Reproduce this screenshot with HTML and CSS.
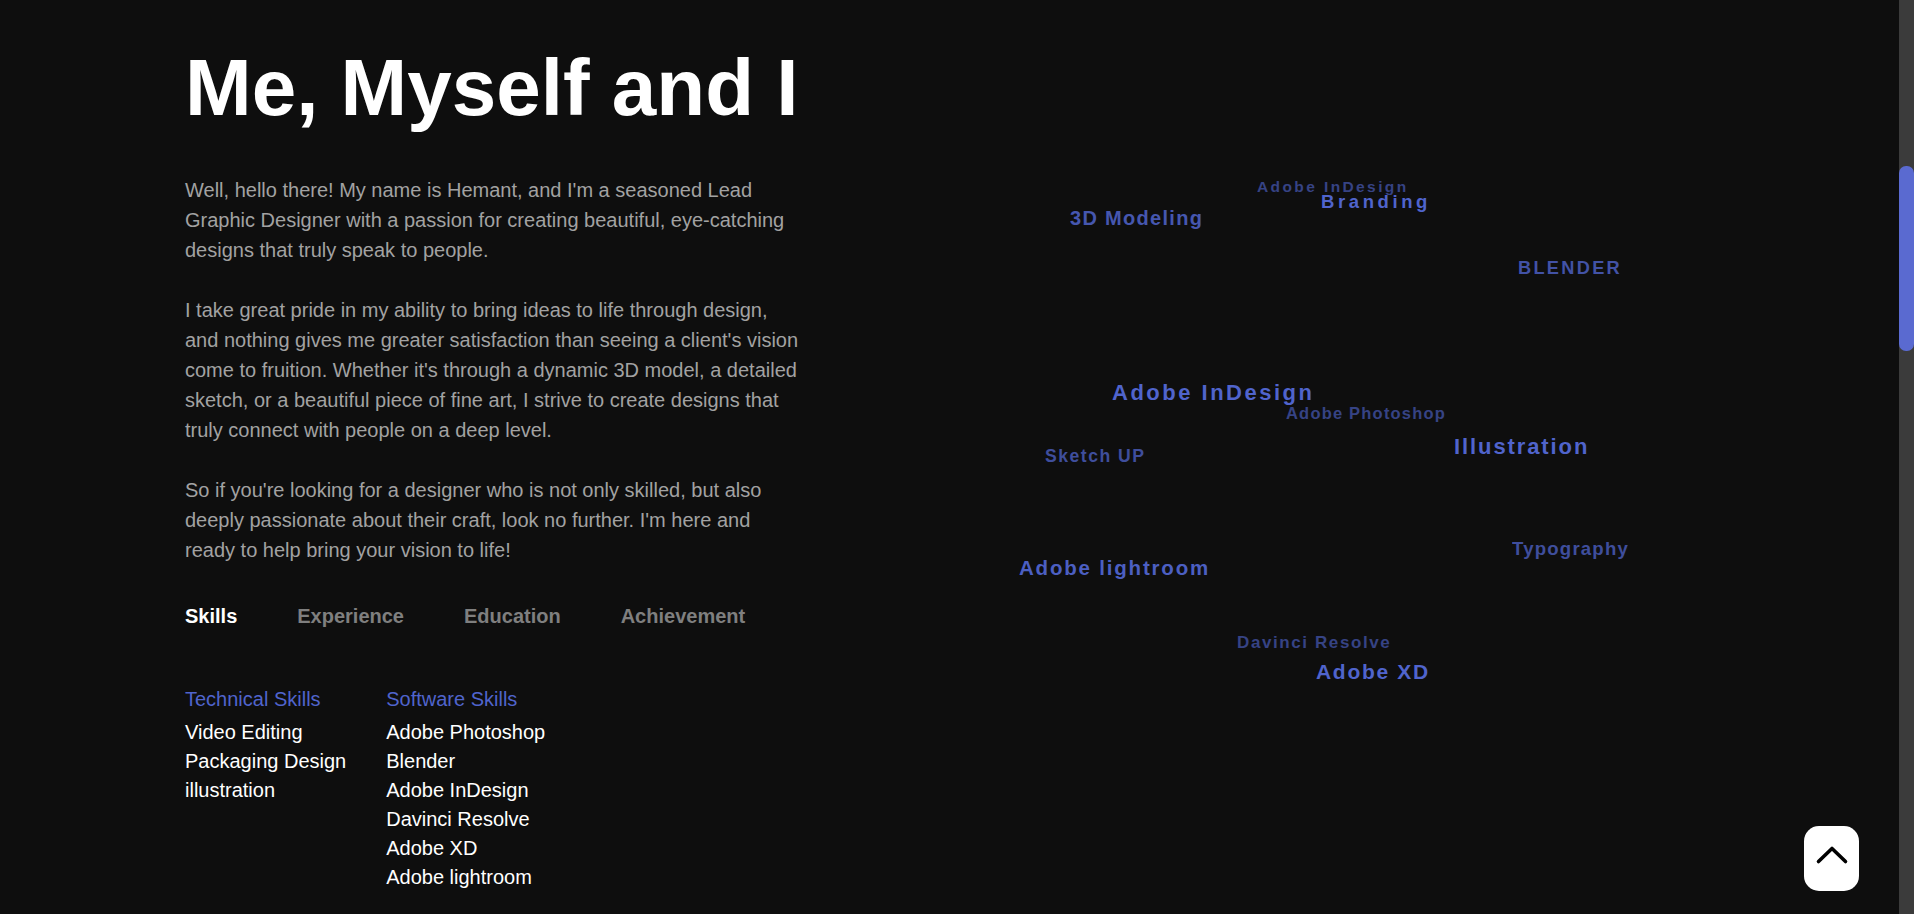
FILE: index.html
```html
<!DOCTYPE html>
<html lang="en">
<head>
<meta charset="utf-8">
<title>Me, Myself and I</title>
<link rel="stylesheet" href="styles.css">
</head>
<body>
<div class="page">
  <section class="about">
    <h1 class="title">Me, Myself and I</h1>
    <div class="intro">
      <p>Well, hello there! My name is Hemant, and I'm a seasoned Lead Graphic Designer with a passion for creating beautiful, eye-catching designs that truly speak to people.</p>
      <p>I take great pride in my ability to bring ideas to life through design, and nothing gives me greater satisfaction than seeing a client's vision come to fruition. Whether it's through a dynamic 3D model, a detailed sketch, or a beautiful piece of fine art, I strive to create designs that truly connect with people on a deep level.</p>
      <p>So if you're looking for a designer who is not only skilled, but also deeply passionate about their craft, look no further. I'm here and ready to help bring your vision to life!</p>
    </div>
    <nav class="tabs">
      <span class="tab active">Skills</span>
      <span class="tab">Experience</span>
      <span class="tab">Education</span>
      <span class="tab">Achievement</span>
    </nav>
    <div class="skills">
      <div class="skill-col">
        <h3 class="skill-head">Technical Skills</h3>
        <ul class="skill-list">
          <li>Video Editing</li>
          <li>Packaging Design</li>
          <li>illustration</li>
        </ul>
      </div>
      <div class="skill-col">
        <h3 class="skill-head">Software Skills</h3>
        <ul class="skill-list">
          <li>Adobe Photoshop</li>
          <li>Blender</li>
          <li>Adobe InDesign</li>
          <li>Davinci Resolve</li>
          <li>Adobe XD</li>
          <li>Adobe lightroom</li>
        </ul>
      </div>
    </div>
  </section>

  <div class="cloud">
    <span class="tag" style="left:257px;top:179px;font-size:15.5px;letter-spacing:2.4px;opacity:.62">Adobe InDesign</span>
    <span class="tag" style="left:321px;top:193px;font-size:18.5px;letter-spacing:3.6px;opacity:1">Branding</span>
    <span class="tag" style="left:70px;top:208px;font-size:20px;letter-spacing:1.3px;opacity:.85">3D Modeling</span>
    <span class="tag" style="left:518px;top:259px;font-size:18.2px;letter-spacing:2.3px;opacity:.8">BLENDER</span>
    <span class="tag" style="left:112px;top:382px;font-size:22px;letter-spacing:2.5px;opacity:1">Adobe InDesign</span>
    <span class="tag" style="left:286px;top:405px;font-size:16.5px;letter-spacing:1.2px;opacity:.62">Adobe Photoshop</span>
    <span class="tag" style="left:45px;top:448px;font-size:17.6px;letter-spacing:1.5px;opacity:.75">Sketch UP</span>
    <span class="tag" style="left:454px;top:436px;font-size:22px;letter-spacing:1.9px;opacity:1">Illustration</span>
    <span class="tag" style="left:512px;top:540px;font-size:18.6px;letter-spacing:1.2px;opacity:.75">Typography</span>
    <span class="tag" style="left:19px;top:558px;font-size:20.5px;letter-spacing:1.8px;opacity:.95">Adobe lightroom</span>
    <span class="tag" style="left:237px;top:634px;font-size:17px;letter-spacing:1.6px;opacity:.62">Davinci Resolve</span>
    <span class="tag" style="left:316px;top:661px;font-size:21px;letter-spacing:1.7px;opacity:1">Adobe XD</span>
  </div>
</div>

<div class="scrollbar"><div class="thumb"></div></div>

<a class="to-top" href="#" aria-label="Back to top">
  <svg width="55" height="65" viewBox="0 0 55 65" aria-hidden="true">
    <polyline points="14.5,35.5 28,22.5 41.5,35.5" fill="none" stroke="#000" stroke-width="3.6" stroke-linecap="round" stroke-linejoin="round"/>
  </svg>
</a>
</body>
</html>
```

FILE: styles.css
```css
html, body {
  margin: 0;
  padding: 0;
  height: 100%;
}

body {
  background: #0e0e0e;
  color: #fff;
  font-family: "Liberation Sans", Arial, sans-serif;
  display: flex;
  overflow: hidden;
}

.page {
  flex: 1;
  display: flex;
  align-items: flex-start;
  padding-left: 185px;
  min-width: 0;
}

.about {
  width: 616px;
  flex: none;
  padding-top: 42px;
}

.title {
  margin: 0;
  font-size: 80px;
  line-height: 92px;
  font-weight: 700;
  color: #fff;
  white-space: nowrap;
}

.intro {
  margin-top: 41px;
}

.intro p {
  margin: 0 0 30px;
  font-size: 20px;
  line-height: 30px;
  color: #a2a2a2;
}

.intro p:last-child {
  margin-bottom: 0;
}

.tabs {
  display: flex;
  gap: 60px;
  margin-top: 36px;
  font-size: 20px;
  line-height: 30px;
  font-weight: 700;
}

.tab {
  color: #7f7f7f;
}

.tab.active {
  color: #fff;
}

.skills {
  display: flex;
  gap: 40px;
  margin-top: 54px;
}

.skill-head {
  margin: 0 0 4px;
  font-size: 20px;
  line-height: 29px;
  font-weight: 400;
  color: #5064cc;
}

.skill-list {
  list-style: none;
  margin: 0;
  padding: 0;
  font-size: 20px;
  line-height: 29px;
  color: #fff;
}

.cloud {
  position: relative;
  flex: none;
  width: 660px;
  height: 914px;
  margin-left: 199px;
}

.tag {
  position: absolute;
  white-space: nowrap;
  font-weight: 700;
  line-height: 1;
  color: #5064cc;
}

.scrollbar {
  flex: none;
  width: 15px;
  height: 100%;
  background: #3b3b3b;
  padding-top: 166px;
  box-sizing: border-box;
}

.thumb {
  height: 185px;
  border-radius: 7px;
  background: #5a6ad0;
}

.to-top {
  position: fixed;
  right: 55px;
  bottom: 23px;
  width: 55px;
  height: 65px;
  border-radius: 15px;
  background: #fff;
  display: block;
}

.to-top svg {
  display: block;
}
```
